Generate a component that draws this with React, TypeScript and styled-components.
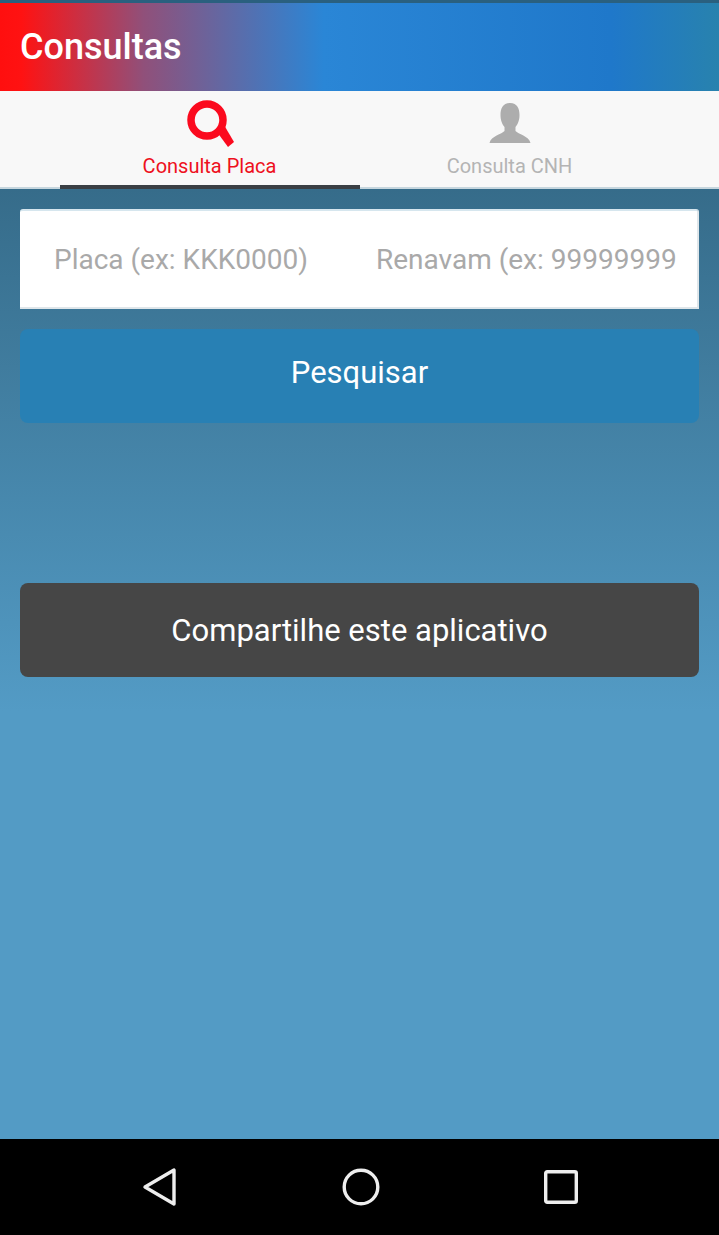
import React from 'react'
import styled, { createGlobalStyle } from 'styled-components'

const Global = createGlobalStyle`
  html, body { margin: 0; padding: 0; }
  body { font-family: Roboto, "Liberation Sans", sans-serif; background: #000; }
  * { box-sizing: border-box; }
`

export default function App() {
  return (
    <>
      <Global />
      <Screen>
        <StatusStrip />
        <Header>
          <Title>Consultas</Title>
        </Header>
        <Tabs>
          <Tab $active>
            <svg width="52" height="50" viewBox="0 0 52 50">
              <circle cx="23" cy="22" r="16" fill="none" stroke="#fb0a1e" strokeWidth="7.5" />
              <path d="M33 34 L40 27 L50 44 L44 49 Z" fill="#fb0a1e" />
            </svg>
            <TabLabel $active>Consulta Placa</TabLabel>
          </Tab>
          <Tab>
            <svg width="44" height="44" viewBox="0 0 44 44">
              <path
                d="M22 2 C14.5 2 12.5 8 12.5 14 C12.5 20 14.5 23.5 16.5 26 L16.5 30 C14 33 3 35 1.5 42 L42.5 42 C41 35 30 33 27.5 30 L27.5 26 C29.5 23.5 31.5 20 31.5 14 C31.5 8 29.5 2 22 2 Z"
                fill="#adadad"
              />
            </svg>
            <TabLabel>Consulta CNH</TabLabel>
          </Tab>
        </Tabs>
        <Content>
          <InputCard>
            <Field placeholder="Placa (ex: KKK0000)" />
            <Field placeholder="Renavam (ex: 99999999999)" />
          </InputCard>
          <ActionButton $bg="#2880b4">Pesquisar</ActionButton>
          <ShareButton $bg="#464646">Compartilhe este aplicativo</ShareButton>
        </Content>
        <NavBar>
          <svg width="36" height="40" viewBox="0 0 36 40">
            <path d="M32 3 L32 37 L3 20 Z" fill="none" stroke="#eee" strokeWidth="3.4" strokeLinejoin="round" />
          </svg>
          <svg width="40" height="40" viewBox="0 0 40 40">
            <circle cx="20" cy="20" r="16.8" fill="none" stroke="#eee" strokeWidth="3.4" />
          </svg>
          <svg width="36" height="36" viewBox="0 0 36 36">
            <rect x="2.7" y="2.7" width="30.6" height="30.6" rx="1.5" fill="none" stroke="#eee" strokeWidth="3.4" />
          </svg>
        </NavBar>
      </Screen>
    </>
  )
}

const Screen = styled.div`
  width: 719px;
  height: 1235px;
  display: flex;
  flex-direction: column;
  overflow: hidden;
`
const StatusStrip = styled.div`
  height: 3px;
  background: #2a607f;
`
const Header = styled.header`
  height: 88px;
  display: flex;
  align-items: center;
  padding-left: 20px;
  background: linear-gradient(
    90deg,
    #ff0f0f 0%,
    #ff1212 3%,
    #90507a 20%,
    #2a86d6 45%,
    #1f78ca 85%,
    #2882ae 100%
  );
`
const Title = styled.h1`
  margin: 0;
  font-size: 36px;
  font-weight: 500;
  color: #fff;
`
const Tabs = styled.nav`
  height: 98px;
  display: flex;
  justify-content: center;
  background: #f8f8f8;
  border-bottom: 2px solid #c6d6de;
`
const Tab = styled.div<{ $active?: boolean }>`
  width: 300px;
  height: 98px;
  display: flex;
  flex-direction: column;
  align-items: center;
  justify-content: flex-start;
  padding-top: ${p => (p.$active ? '7px' : '10px')};
  border-bottom: 4px solid ${p => (p.$active ? '#3a3f44' : 'transparent')};
  svg { display: block; }
`
const TabLabel = styled.span<{ $active?: boolean }>`
  font-size: 20px;
  line-height: 24px;
  margin-top: ${p => (p.$active ? '6px' : '9px')};
  color: ${p => (p.$active ? '#ee1020' : '#b4b4b4')};
`
const Content = styled.main`
  flex: 1;
  padding: 20px;
  display: flex;
  flex-direction: column;
  background: linear-gradient(180deg, #366c8a 0%, #539bc5 55%, #539bc5 100%);
`
const InputCard = styled.div`
  height: 100px;
  display: flex;
  padding: 0 20px 0 34px;
  background: #fff;
  border-radius: 3px 3px 0 0;
  border-top: 2px solid #d6e6ee;
  border-bottom: 2px solid #dfe6ea;
  border-right: 2px solid #dfe6ea;
`
const Field = styled.input`
  flex: 1;
  min-width: 0;
  border: 0;
  outline: 0;
  background: none;
  padding: 0;
  font-family: inherit;
  font-size: 28px;
  color: #333;
  &:first-child { flex: none; width: 322px; }
  &::placeholder { color: #a9a9a9; opacity: 1; }
`
const ActionButton = styled.button<{ $bg: string }>`
  height: 94px;
  margin-top: 20px;
  padding: 0 0 8px;
  border: 0;
  border-radius: 8px;
  background: ${p => p.$bg};
  color: #fff;
  font-family: inherit;
  font-size: 31px;
`
const ShareButton = styled(ActionButton)`
  margin-top: 160px;
  padding: 0;
`
const NavBar = styled.footer`
  height: 96px;
  display: flex;
  align-items: center;
  background: #000;
  padding: 0 140px 0 142px;
  justify-content: space-between;
  svg { display: block; }
`
